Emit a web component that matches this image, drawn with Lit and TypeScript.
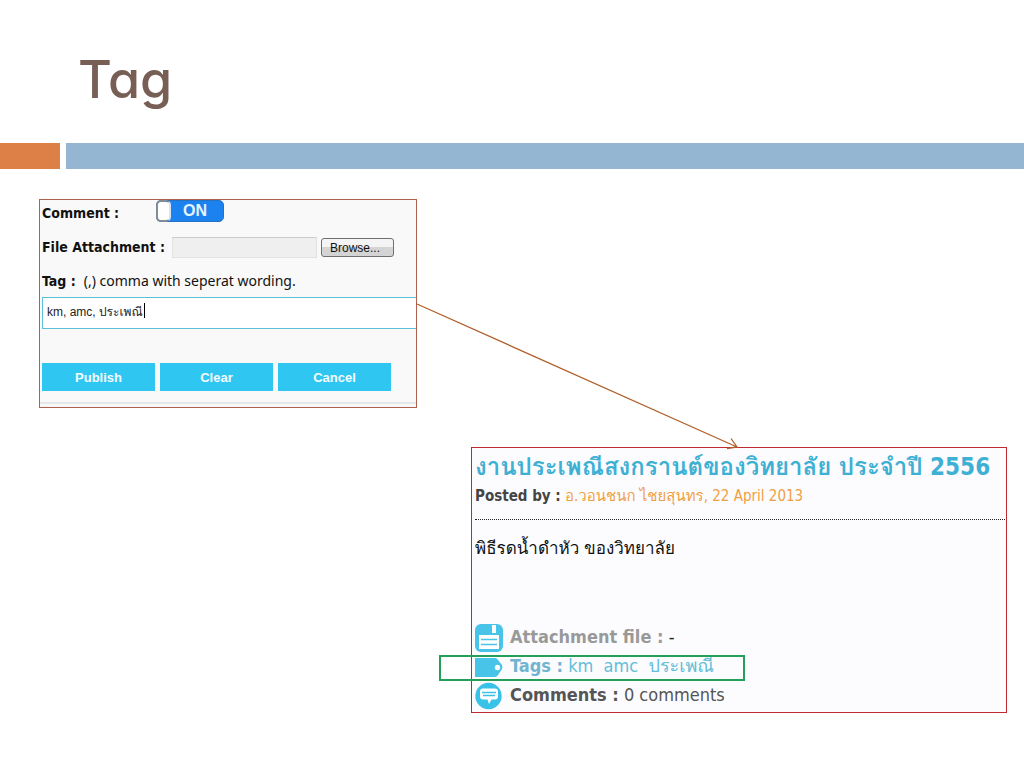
import { LitElement, html, css } from "lit";
import { customElement } from "lit/decorators.js";

@customElement("tag-form")
class TagForm extends LitElement {
  static styles = css`
    :host {
      display: block;
      box-sizing: border-box;
      border: 1px solid #b0614a;
      background: #f9f9f9;
      overflow: hidden;
      font: 14px/20px "DejaVu Sans Condensed", Waree, Loma, "Noto Sans Thai Looped", sans-serif;
      color: #111;
    }
    form { display: flex; flex-direction: column; padding: 0 0 3px 2px; }
    .row { display: flex; align-items: center; height: 34px; }
    .first { height: 26px; margin-bottom: 4px; }
    .name { font-weight: bold; }
    .first .name { width: 114px; }
    .switch {
      appearance: none;
      margin: 0 0 4px;
      width: 68px;
      height: 22px;
      border-radius: 5px;
      background: #1c82f0;
      border: 1px solid #2872c4;
      position: relative;
    }
    .switch::before {
      content: "";
      position: absolute;
      inset: -1px auto -1px -1px;
      box-sizing: border-box;
      width: 15px;
      border: 2px solid #828c98;
      border-right-color: #d8e4f0;
      border-radius: 5px;
      background: #fff;
    }
    .switch::after {
      content: "ON";
      position: absolute;
      left: 26px;
      top: 0;
      color: #e6f4ff;
      font: bold 16px/20px "Liberation Sans", sans-serif;
    }
    .file {
      box-sizing: border-box;
      width: 145px;
      height: 21px;
      margin: 0 4px 0 7px;
      border: 1px solid #e2e2e2;
      border-top-color: #ccc;
      background: #efefef;
    }
    .browse {
      width: 73px;
      height: 19px;
      padding: 1px 5px 0 0;
      border: 1px solid #707070;
      border-radius: 3px;
      background: linear-gradient(#f4f4f4 50%, #d4d4d4 50%);
      font: 12px/16px "Liberation Sans", sans-serif;
      color: #111;
    }
    .hint { gap: 8px; height: 33px; font-family: "Noto Sans", sans-serif; }
    .hint .name { font-family: "DejaVu Sans Condensed", sans-serif; }
    .field { position: relative; height: 32px; }
    .tags {
      display: block;
      box-sizing: border-box;
      width: 100%;
      height: 32px;
      margin: 0;
      padding: 0 4px 4px;
      border: 1px solid #5cc0d8;
      border-right: 0;
      background: #fff;
      font: 12px/16px "Liberation Sans", Waree, Loma, "Noto Sans Thai Looped", sans-serif;
      color: #222;
      outline: none;
    }
    .caret { position: absolute; left: 102px; top: 6px; width: 1px; height: 15px; background: #000; }
    .actions { display: flex; gap: 5px; margin: 34px 0 11px; }
    .actions button {
      width: 113px;
      height: 28px;
      padding: 2px 0 0;
      border: 0;
      background: #30c6f2;
      color: #f4fcff;
      font: bold 13px/16px "Liberation Sans", sans-serif;
    }
    .foot { height: 2px; background: #e4e8e8; margin-left: -2px; }
  `;

  render() {
    return html`
      <form @submit=${(e: Event) => e.preventDefault()}>
        <div class="row first">
          <label class="name" for="comment">Comment :</label>
          <input class="switch" id="comment" type="checkbox" checked />
        </div>
        <div class="row">
          <label class="name" for="file">File Attachment :</label>
          <input class="file" id="file" type="text" readonly />
          <button class="browse" type="button">Browse...</button>
        </div>
        <label class="row hint" for="tags"><span class="name">Tag :</span><span>(,) comma with seperat wording.</span></label>
        <div class="field">
          <input class="tags" id="tags" type="text" value="km, amc, ประเพณี" />
          <span class="caret"></span>
        </div>
        <div class="actions">
          <button type="submit">Publish</button>
          <button type="reset">Clear</button>
          <button type="button">Cancel</button>
        </div>
        <div class="foot"></div>
      </form>
    `;
  }
}

@customElement("post-card")
class PostCard extends LitElement {
  static styles = css`
    :host {
      display: block;
      box-sizing: border-box;
      border: 1px solid #c02a30;
      background: #fcfcff;
      padding: 5px 1px 2px 3px;
      font: 18px/28px "DejaVu Sans Condensed", Waree, Loma, "Noto Sans Thai Looped", sans-serif;
      color: #555;
    }
    h2 { margin: 0; font-size: 24px; line-height: 28px; font-weight: bold; color: #3eb0d4; white-space: nowrap; }
    .by { font-size: 15px; line-height: 30px; color: #f0a044; white-space: nowrap; }
    .by b { color: #444; }
    .by a { color: inherit; text-decoration: none; }
    hr { margin: 8px 0 0; border: 0; border-top: 1px dotted #222; padding-bottom: 1px; }
    .body { margin: 13px 0 61px; color: #111; font-size: 17px; line-height: 28px; }
    .meta { display: flex; align-items: center; gap: 7px; height: 29px; white-space: pre; }
    .meta svg { width: 28px; height: 28px; flex: none; }
    .meta > span:not(.mark) { padding-bottom: 2px; }
    .file b { color: #999; }
    .file { color: #222; }
    .tags { position: relative; color: #62bfd8; }
    .tags b { color: #70b4d0; }
    .tags a { color: inherit; text-decoration: none; }
    .mark { position: absolute; left: -36px; top: 3px; width: 306px; height: 26px; box-sizing: border-box; border: 2px solid #22a05a; }
  `;

  render() {
    return html`
      <article>
        <h2>งานประเพณีสงกรานต์ของวิทยาลัย ประจำปี 2556</h2>
        <div class="by"><b>Posted by :</b> <a href="#author">อ.วอนชนก ไชยสุนทร, 22 April 2013</a></div>
        <hr />
        <div class="body">พิธีรดน้ำดำหัว ของวิทยาลัย</div>
        <div class="meta file">
          <svg viewBox="0 0 28 28" aria-hidden="true">
            <rect width="28" height="28" rx="6" fill="#48c4e8" />
            <path d="M17 1h4v8h-4zM4 11h20v14H4z" fill="#fff" />
            <path d="M6 15.5h16M6 20.5h16" stroke="#48c4e8" stroke-width="1.5" />
          </svg>
          <span><b>Attachment file :</b> -</span>
        </div>
        <div class="meta tags">
          <svg viewBox="0 0 28 28" aria-hidden="true">
            <path d="M0 5h20q2 0 3 2l4 5q1 2 0 4l-4 6q-1 2-3 2H0z" fill="#48c4e8" />
            <circle cx="22.5" cy="14.5" r="2.7" fill="#fff" />
          </svg>
          <span><b>Tags :</b> <a href="#km">km</a>  <a href="#amc">amc</a>  <a href="#tradition">ประเพณี</a></span>
          <span class="mark"></span>
        </div>
        <div class="meta">
          <svg viewBox="0 0 28 28" aria-hidden="true">
            <circle cx="13.5" cy="14" r="13.2" fill="#38c2e8" />
            <path d="M8 6.5h12q3 0 3 3v5q0 3-3 3h-3.5L14 22l-1.5-4.5H8q-3 0-3-3v-5q0-3 3-3z" fill="#fff" />
            <path d="M7 10.5h14M8 13.5h12" stroke="#38c2e8" stroke-width="1.3" />
          </svg>
          <span><b>Comments :</b> 0 comments</span>
        </div>
      </article>
    `;
  }
}

@customElement("app-root")
class AppRoot extends LitElement {
  static styles = css`
    :host { display: block; min-height: 100vh; background: #fff; overflow: hidden; }
    h1 { margin: 0; padding: 47px 0 30px 78px; font: 500 52px/66px Inter, sans-serif; font-feature-settings: "cv11"; color: #775f55; }
    .bar { display: grid; grid-template-columns: 60px 1fr; gap: 6px; height: 26px; }
    .accent { background: #dd8047; }
    .rule { background: #94b6d2; }
    main { position: relative; display: flex; flex-direction: column; gap: 39px; padding: 30px 17px 0 39px; }
    tag-form { width: 378px; }
    post-card { align-self: flex-end; width: 536px; }
    .arrow { position: absolute; left: 416px; top: 130px; width: 330px; height: 155px; }
  `;

  render() {
    return html`
      <header><h1>Tag</h1></header>
      <div class="bar"><div class="accent"></div><div class="rule"></div></div>
      <main>
        <tag-form></tag-form>
        <post-card></post-card>
        <svg class="arrow" viewBox="0 0 330 155" fill="none" stroke="#b0602c" stroke-width="1.3" aria-hidden="true">
          <path d="M1 5L321 148M311 149.5L321 148L315 139.5" />
        </svg>
      </main>
    `;
  }
}
